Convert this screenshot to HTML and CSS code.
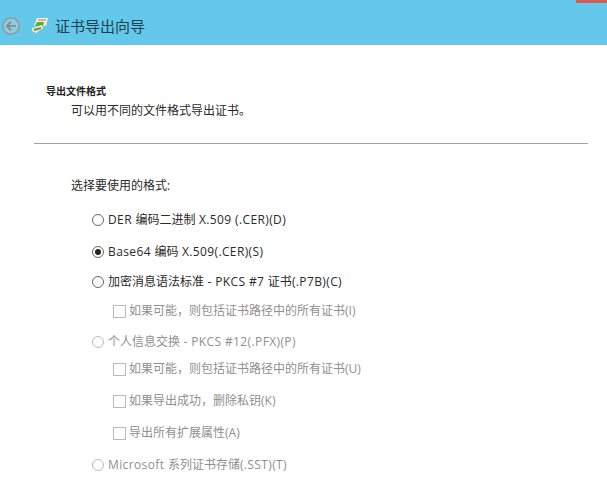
FILE: index.html
```html
<!DOCTYPE html>
<html lang="zh">
<head>
<meta charset="utf-8">
<title>证书导出向导</title>
<link rel="stylesheet" href="styles.css">
</head>
<body>
<header class="header">
  <svg class="back" width="20" height="20" viewBox="0 0 20 20">
    <circle cx="10" cy="10" r="8.2" fill="#8fcde3" stroke="#8a9fa8" stroke-width="1.8"/>
    <path d="M15 10H6M10 5.800 5.800 10l4.200 4.200" fill="none" stroke="#7f949d" stroke-width="2.200"/>
  </svg>
  <svg class="cert" width="16" height="15" viewBox="0 0 16 15">
    <path d="M5 0h11l-2 8H2z" fill="#f4f2dc"/>
    <path d="M6 2h8" stroke="#d9a53c" stroke-width="1.500"/>
    <path d="M5 4h7l-1 4H3z" fill="#5aa84a"/>
    <path d="M0 10l10-3 1 3-7 5-4-2z" fill="#f2eed6"/>
    <path d="M1 11l8-2v2l-6 2z" fill="#6d9b3c"/>
  </svg>
  <h1 class="title">证书导出向导</h1>
  <div class="close-strip"></div>
</header>
<main class="page">
  <section class="intro">
    <h2 class="intro-head">导出文件格式</h2>
    <p class="intro-text">可以用不同的文件格式导出证书。</p>
  </section>
  <hr class="rule">
  <p class="prompt">选择要使用的格式:</p>
  <div class="options">
    <div class="row row-der"><span class="radio"></span><span><span class="lat">DER </span>编码二进制<span class="lat"> X.509 (.CER)(D)</span></span></div>
    <div class="row row-b64"><span class="radio radio-on"></span><span><span class="lat">Base64 </span>编码<span class="lat"> X.509(.CER)(S)</span></span></div>
    <div class="row row-p7b"><span class="radio"></span><span>加密消息语法标准<span class="lat"> - PKCS #7 </span>证书<span class="lat">(.P7B)(C)</span></span></div>
    <div class="row row-sub row-i off"><span class="check"></span><span>如果可能，则包括证书路径中的所有证书(I)</span></div>
    <div class="row row-pfx off"><span class="radio"></span><span>个人信息交换<span class="lat"> - PKCS #12(.PFX)(P)</span></span></div>
    <div class="row row-sub row-u off"><span class="check"></span><span>如果可能，则包括证书路径中的所有证书(U)</span></div>
    <div class="row row-sub row-k off"><span class="check"></span><span>如果导出成功，删除私钥(K)</span></div>
    <div class="row row-sub row-a off"><span class="check"></span><span>导出所有扩展属性(A)</span></div>
    <div class="row row-sst off"><span class="radio"></span><span><span class="lat">Microsoft </span>系列证书存储<span class="lat">(.SST)(T)</span></span></div>
  </div>
</main>
</body>
</html>
```
FILE: styles.css
```css
* { box-sizing: border-box; }
html, body { margin: 0; padding: 0; }
body {
  width: 607px;
  height: 503px;
  overflow: hidden;
  background: #fff;
  color: #2a2a2a;
  font-family: "Open Sans", "Noto Sans CJK SC", sans-serif;
  font-size: 12px;
}
.header {
  position: relative;
  height: 45px;
  display: flex;
  align-items: center;
  padding: 8px 0 0 1px;
  background: #63c8ea;
  border-bottom: 1px solid #84b8cc;
}
.back { margin-right: 11px; }
.cert { margin-right: 7px; margin-top: -1px; }
.title {
  margin: 0;
  font-size: 15px;
  font-weight: 400;
  line-height: 20px;
  color: #1d4050;
}
.close-strip {
  position: absolute;
  top: 0;
  right: 0;
  width: 31px;
  height: 3px;
  background: #c8625a;
}
.page { display: flex; flex-direction: column; }
.intro { padding: 39px 0 0 46px; }
.intro-head {
  margin: 0;
  font-size: 10px;
  font-weight: 700;
  line-height: 14px;
  color: #222;
}
.intro-text {
  margin: 4px 0 0;
  padding-left: 25px;
  font-size: 12px;
  line-height: 18px;
}
.rule {
  margin: 23px 19px 0 34px;
  border: 0;
  height: 1px;
  background: #a0a0a0;
}
.prompt {
  margin: 33px 0 0 71px;
  font-size: 12px;
  line-height: 18px;
}
.options { display: flex; flex-direction: column; padding-left: 92px; }
.row {
  display: flex;
  align-items: center;
  height: 18px;
  gap: 4px;
  line-height: 18px;
  white-space: nowrap;
}
.lat { letter-spacing: 0.38px; }
.row-der { margin-top: 16px; }
.row-b64 { margin-top: 14px; }
.row-p7b { margin-top: 12px; }
.row-i { margin-top: 11px; }
.row-pfx { margin-top: 13px; }
.row-u { margin-top: 9px; }
.row-k { margin-top: 14px; }
.row-a { margin-top: 14px; }
.row-sst { margin-top: 14px; }
.row-sub { padding-left: 21px; gap: 3px; }
.off { color: #8f8f8f; }
.radio {
  flex: none;
  width: 12px;
  height: 12px;
  border: 1px solid #666;
  border-radius: 50%;
  background: #fff;
}
.radio-on { position: relative; }
.radio-on::after {
  content: "";
  position: absolute;
  inset: 2px;
  border-radius: 50%;
  background: #222;
}
.off .radio { border-color: #bbb; }
.check {
  flex: none;
  width: 13px;
  height: 13px;
  border: 1px solid #bbb;
  background: #fff;
}
```
